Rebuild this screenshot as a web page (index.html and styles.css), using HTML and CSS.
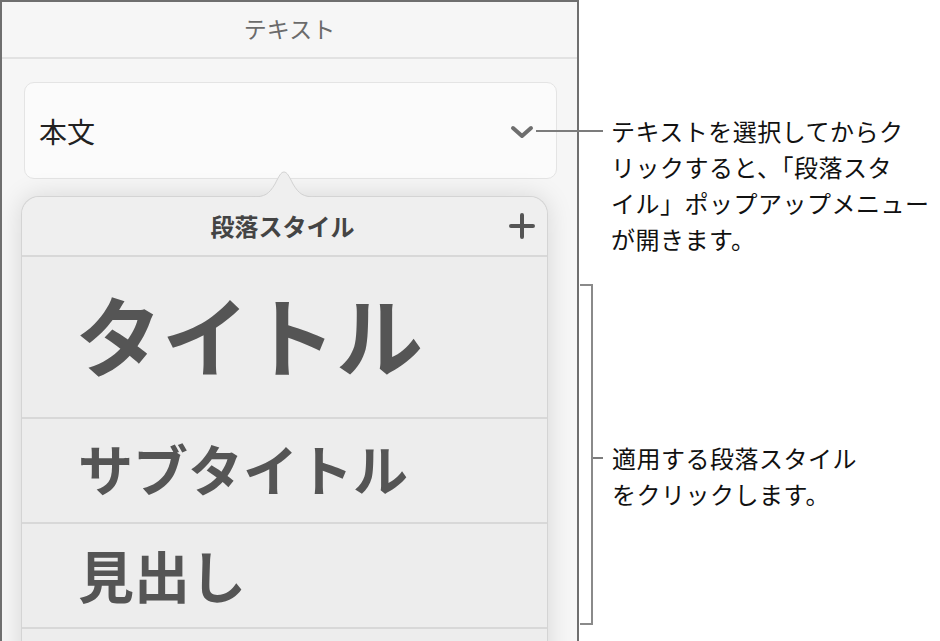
FILE: index.html
```html
<!DOCTYPE html>
<html lang="ja">
<head>
    <meta charset="UTF-8">
    <meta name="viewport" content="width=device-width, initial-scale=1.0">
    <title>段落スタイル</title>
    <link rel="stylesheet" href="styles.css">
</head>
<body>
    <div class="page">
        <div class="panel">
            <div class="panel-head">テキスト</div>

            <div class="style-select">
                <span class="style-name">本文</span>
                <svg class="chevron" width="24" height="14" viewBox="0 0 24 14">
                    <path d="M3 3 L12 11 L21 3" fill="none" stroke="#6e6e6e" stroke-width="4" stroke-linecap="round" stroke-linejoin="round"/>
                </svg>
            </div>

            <div class="popover">
                <svg class="popover-tip" width="64" height="28" viewBox="0 0 64 28">
                    <path d="M0 27 C13 27 17 24 23 14 C27 6 29 2 32 2 C35 2 37 6 41 14 C47 24 51 27 64 27 Z" fill="#efefef"/>
                    <path d="M0 27 C13 27 17 24 23 14 C27 6 29 2 32 2 C35 2 37 6 41 14 C47 24 51 27 64 27" fill="none" stroke="#d2d2d2" stroke-width="1"/>
                </svg>
                <div class="popover-head">
                    <span class="popover-title">段落スタイル</span>
                    <svg class="plus" width="26" height="26" viewBox="0 0 26 26">
                        <path d="M13 2 V24 M2 13 H24" stroke="#555" stroke-width="4" stroke-linecap="round"/>
                    </svg>
                </div>
                <div class="style-row row-title">タイトル</div>
                <div class="style-row row-sub">サブタイトル</div>
                <div class="style-row row-heading">見出し</div>
                <div class="style-row row-next"></div>
            </div>
        </div>

        <div class="notes">
            <div class="note note-top">
                <span class="leader leader-long"></span>
                <p>テキストを選択してからク<br>リックすると、「段落スタ<br>イル」ポップアップメニュー<br>が開きます。</p>
            </div>

            <div class="bracket-group">
                <div class="bracket"></div>
                <div class="note note-side">
                    <span class="leader leader-short"></span>
                    <p>適用する段落スタイル<br>をクリックします。</p>
                </div>
            </div>
        </div>
    </div>
</body>
</html>
```

FILE: styles.css
```css
html, body {
    margin: 0;
    padding: 0;
    background: #ffffff;
    overflow: hidden;
}

body {
    font-family: "Noto Sans CJK JP", "Noto Sans", sans-serif;
}

.page {
    display: flex;
    height: 641px;
}

/* left inspector panel */
.panel {
    width: 575px;
    height: 639px;
    flex-shrink: 0;
    border: 2px solid #6f6f6f;
    border-bottom: none;
    background: #f6f6f6;
    overflow: hidden;
}

.panel-head {
    height: 53px;
    border-bottom: 2px solid #e2e2e2;
    display: flex;
    align-items: center;
    justify-content: center;
    font-size: 23px;
    color: #6b6b6b;
    line-height: 1;
    padding-bottom: 2px;
}

.style-select {
    margin: 23px 20px 0 22px;
    height: 95px;
    border: 1px solid #e4e4e4;
    border-radius: 10px;
    background: #fbfbfb;
    display: flex;
    align-items: center;
    justify-content: space-between;
    padding: 0 22px 0 14px;
}

.style-name {
    font-size: 28px;
    color: #222;
    line-height: 1;
}

.chevron {
    display: block;
    margin-top: 2px;
}

.popover {
    position: relative;
    margin: 17px 29px 0 19px;
    height: 520px;
    background: #ededed;
    border: 1px solid #d4d4d4;
    border-bottom: none;
    border-radius: 18px 18px 0 0;
    box-shadow: 0 0 26px rgba(0, 0, 0, 0.13);
}

.popover-tip {
    position: absolute;
    top: -27px;
    left: 230px;
    display: block;
}

.popover-head {
    height: 58px;
    border-bottom: 2px solid #d8d8d8;
    display: flex;
    align-items: center;
    justify-content: center;
    position: relative;
    background: #efefef;
    border-radius: 18px 18px 0 0;
}

.popover-title {
    font-size: 24px;
    font-weight: 700;
    color: #444;
    line-height: 1;
    margin-right: 4px;
}

.plus {
    position: absolute;
    right: 12px;
    top: 16px;
}

.style-row {
    box-sizing: border-box;
    border-bottom: 2px solid #d8d8d8;
    display: flex;
    align-items: center;
    padding-left: 56px;
    font-weight: 700;
    color: #555;
    line-height: 1;
}

.row-title {
    height: 162px;
    font-size: 87px;
    padding-left: 53px;
    padding-bottom: 8px;
}

.row-sub {
    height: 105px;
    font-size: 55px;
    padding-bottom: 6px;
}

.row-heading {
    height: 105px;
    font-size: 56px;
    padding-bottom: 4px;
}

.row-next {
    height: 100px;
}

/* right-hand callouts */
.notes {
    flex: 1;
    display: flex;
    flex-direction: column;
}

.note {
    display: flex;
    align-items: flex-start;
}

.note p {
    margin: 0;
    font-size: 24px;
    line-height: 36px;
    letter-spacing: 0.5px;
    color: #111;
    white-space: nowrap;
}

.leader {
    display: block;
    height: 2px;
    background: #7c7c7c;
    margin-top: 17px;
    flex-shrink: 0;
}

.note-top {
    margin-top: 113px;
    margin-left: -43px;
    position: relative;
    z-index: 1;
}

.leader-long {
    width: 67px;
    margin-right: 8px;
}

.bracket-group {
    display: flex;
    margin-top: 27px;
}

.bracket {
    width: 11px;
    height: 337px;
    margin-left: 1px;
    border: 2px solid #8a8a8a;
    border-left: none;
    flex-shrink: 0;
}

.note-side {
    margin-top: 156px;
}

.leader-short {
    width: 10px;
    margin-right: 9px;
}
```
